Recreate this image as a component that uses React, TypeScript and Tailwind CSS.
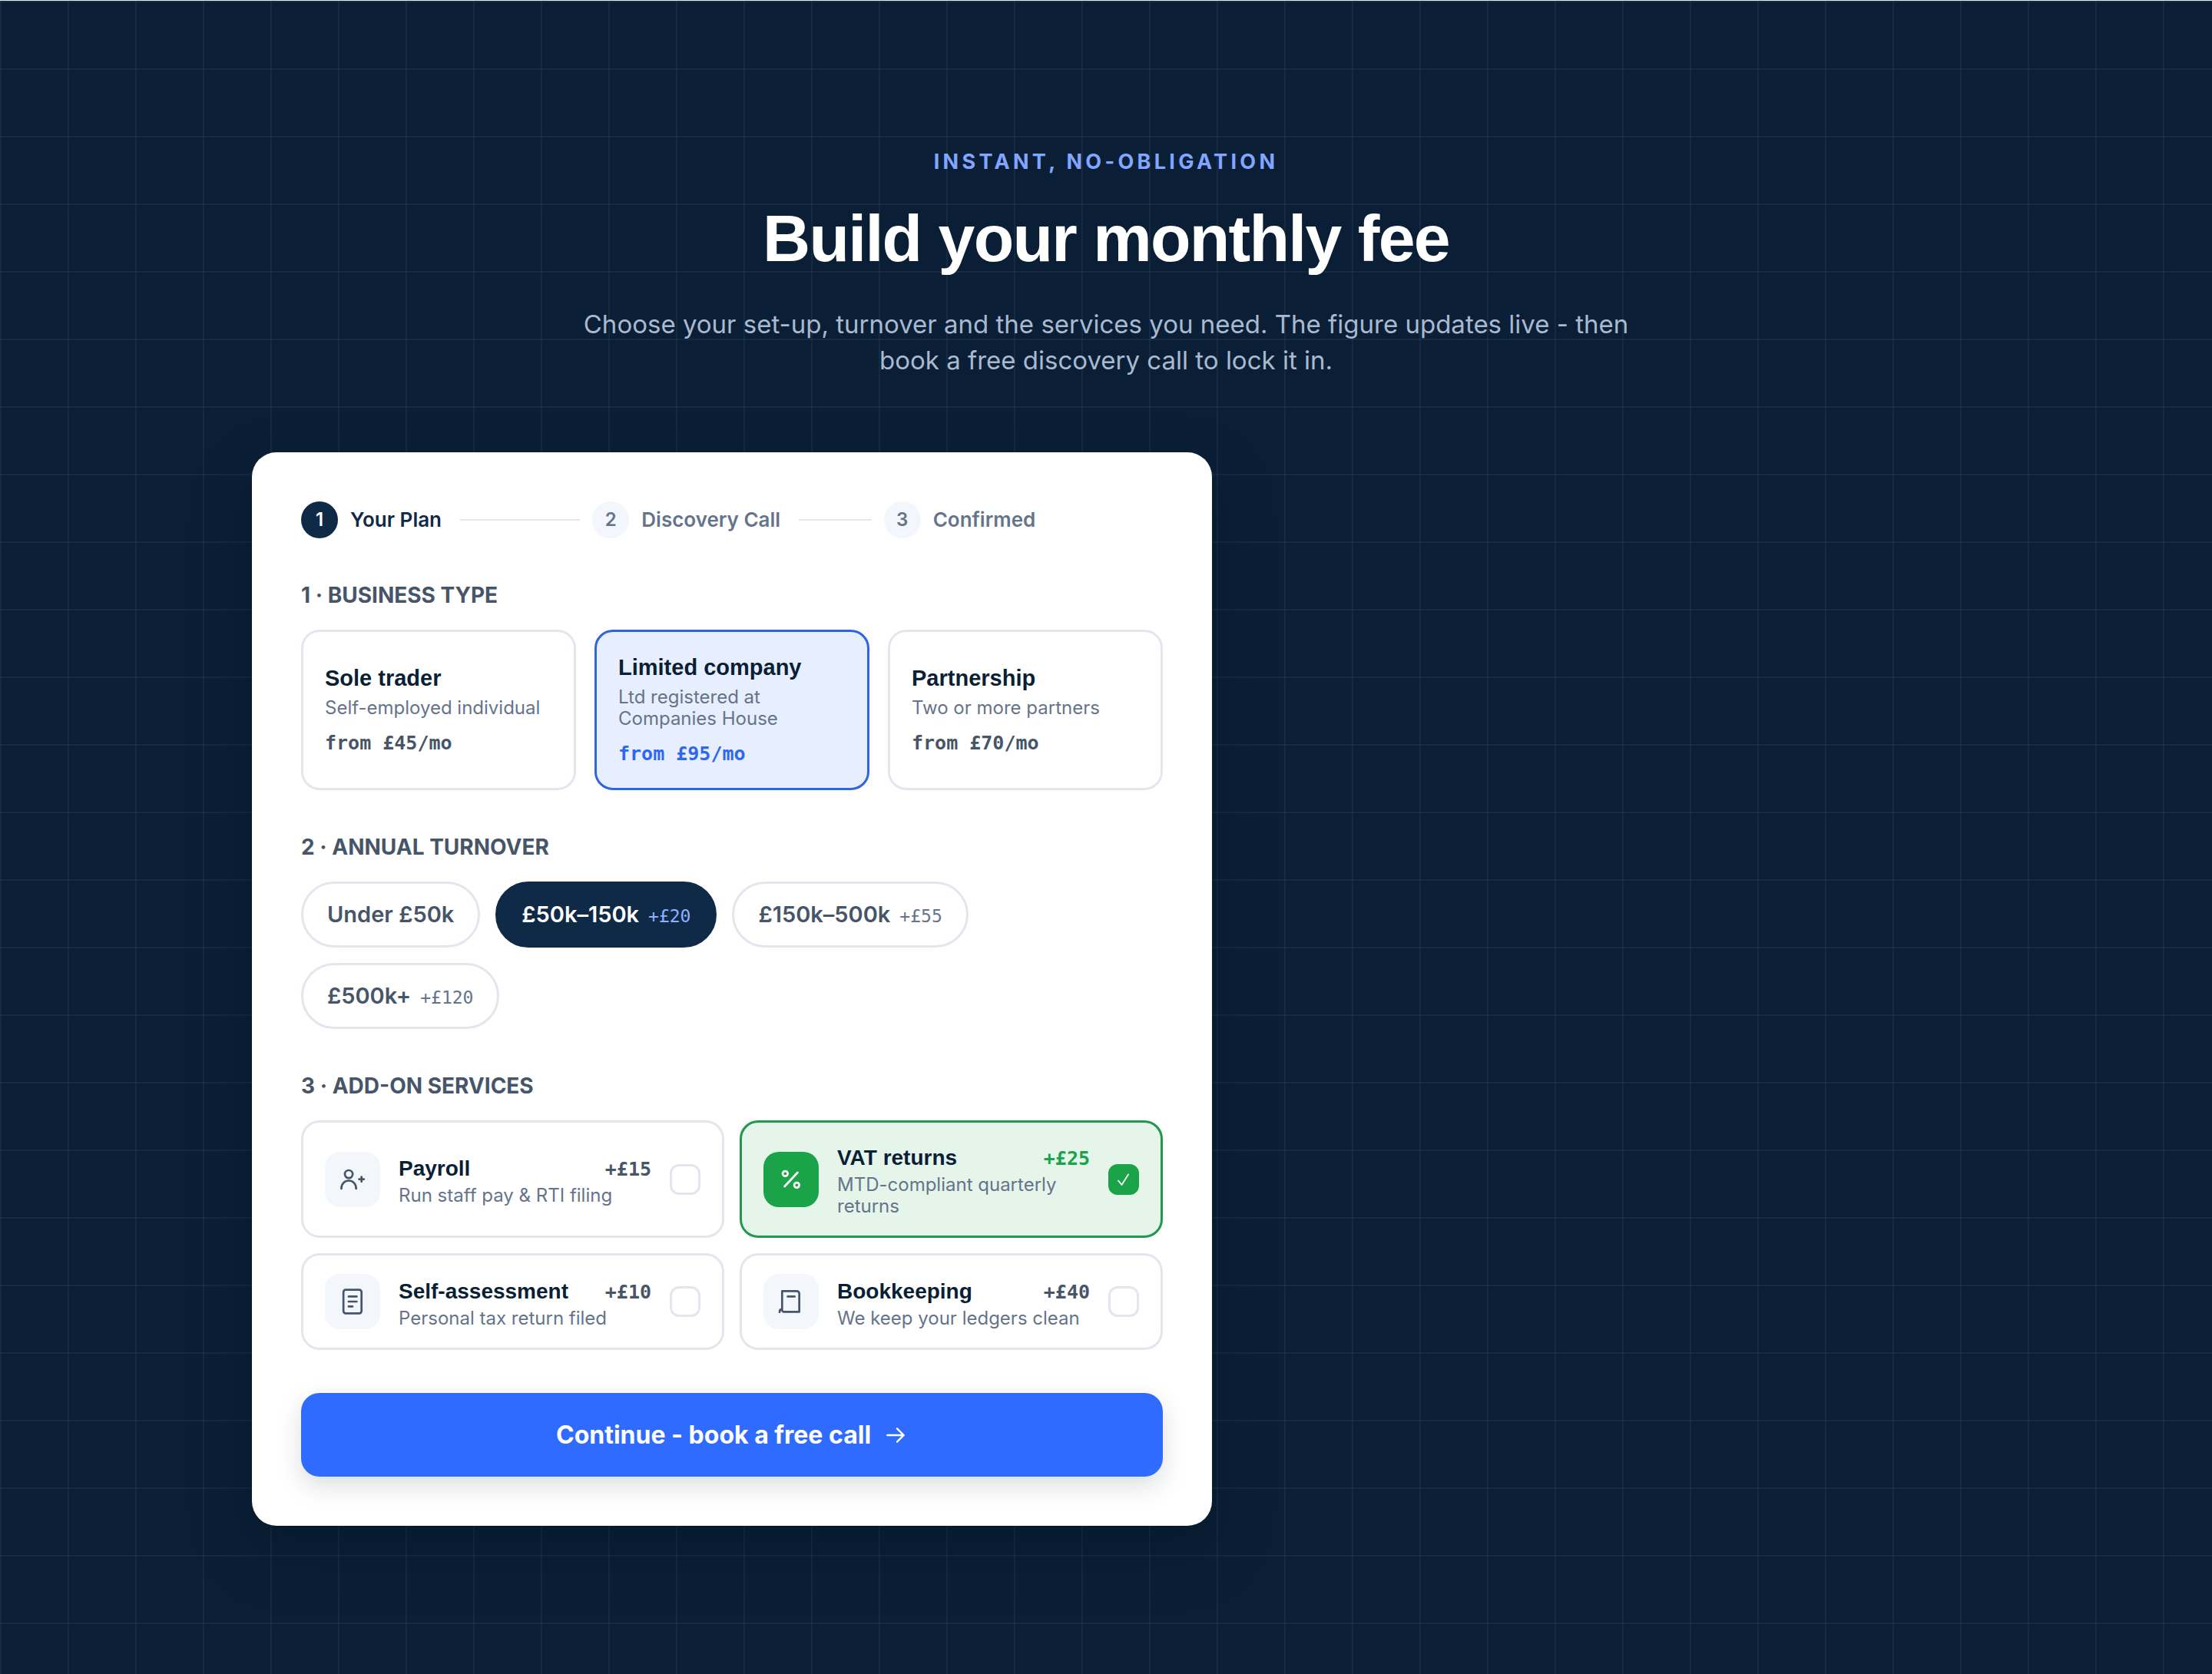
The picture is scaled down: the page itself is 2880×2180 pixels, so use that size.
import { useState, type ReactNode } from "react";

const mono = "font-['DejaVu_Sans_Mono',monospace]";
const display = "font-['Liberation_Sans',Arial,sans-serif]";

const steps = ["Your Plan", "Discovery Call", "Confirmed"];

const plans = [
  { name: "Sole trader", note: "Self-employed individual", price: "from £45/mo" },
  { name: "Limited company", note: "Ltd registered at Companies House", price: "from £95/mo" },
  { name: "Partnership", note: "Two or more partners", price: "from £70/mo" },
];

const bands = [
  { label: "Under £50k", extra: "" },
  { label: "£50k–150k", extra: "+£20" },
  { label: "£150k–500k", extra: "+£55" },
  { label: "£500k+", extra: "+£120" },
];

function Glyph({ children }: { children: ReactNode }) {
  return (
    <svg
      viewBox="0 0 24 24"
      className="size-9"
      fill="none"
      stroke="currentColor"
      strokeWidth="1.8"
      strokeLinecap="round"
      strokeLinejoin="round"
      aria-hidden="true"
    >
      {children}
    </svg>
  );
}

const addons = [
  {
    name: "Payroll",
    note: "Run staff pay & RTI filing",
    price: "+£15",
    icon: (
      <Glyph>
        <circle cx="8.7" cy="7.4" r="3.4" />
        <path d="M2.3 20v-.4a6.4 6.6 0 0 1 12.8 0v.4" />
        <path d="M19.8 9.7v4.2M17.7 11.8h4.2" />
      </Glyph>
    ),
  },
  {
    name: "VAT returns",
    note: "MTD-compliant quarterly returns",
    price: "+£25",
    icon: (
      <Glyph>
        <path d="M17.6 6 6.4 18" />
        <circle cx="6.9" cy="6.9" r="2.2" />
        <circle cx="16.9" cy="16.9" r="2.2" />
      </Glyph>
    ),
  },
  {
    name: "Self-assessment",
    note: "Personal tax return filed",
    price: "+£10",
    icon: (
      <Glyph>
        <rect x="4.1" y="1.8" width="15.7" height="20.4" rx="2" />
        <path d="M8.6 7.6h7M8.6 12h7M8.6 16.3h3.4" />
      </Glyph>
    ),
  },
  {
    name: "Bookkeeping",
    note: "We keep your ledgers clean",
    price: "+£40",
    icon: (
      <Glyph>
        <path d="M4.2 18.6V2.9h12.7a2.2 2.2 0 0 1 2.2 2.2v15.8H6a1.8 1.8 0 0 1-1.8-2.3c-1.6 0-2.2 1-2.2 2.5" />
        <path d="M9.1 7.6h6" />
      </Glyph>
    ),
  },
];

function SectionTitle({ children }: { children: ReactNode }) {
  return (
    <h2 className="mt-14 mb-[26px] text-[28px] leading-[37px] font-bold text-[#475569] uppercase">
      {children}
    </h2>
  );
}

function StepList() {
  return (
    <ol className="grid grid-cols-3 gap-4">
      {steps.map((step, i) => (
        <li key={step} className="flex items-center gap-4">
          <span
            className={`grid size-12 shrink-0 place-items-center rounded-full text-[24px] font-semibold ${
              i === 0 ? "bg-[#0f2a47] text-white" : "bg-[#f3f6fc] text-[#64748b]"
            }`}
          >
            {i + 1}
          </span>
          <span
            className={`text-[26px] leading-9 font-semibold whitespace-nowrap ${
              i === 0 ? "text-[#0f2a47]" : "text-[#64748b]"
            }`}
          >
            {step}
          </span>
          {i < steps.length - 1 && <span className="ml-2 h-0.5 flex-1 bg-[#e2e7f0]" />}
        </li>
      ))}
    </ol>
  );
}

function Calculator() {
  const [plan, setPlan] = useState(1);
  const [band, setBand] = useState(1);
  const [picked, setPicked] = useState([false, true, false, false]);

  return (
    <form
      className="rounded-[32px] bg-white p-16 shadow-[0_32px_80px_rgba(2,10,22,0.28)]"
      onSubmit={(e) => e.preventDefault()}
    >
      <StepList />

      <SectionTitle>1 · Business type</SectionTitle>
      <div className="grid grid-cols-3 gap-6">
        {plans.map((p, i) => (
          <button
            key={p.name}
            type="button"
            aria-pressed={plan === i}
            onClick={() => setPlan(i)}
            className={`flex flex-col justify-center rounded-3xl border-3 p-7 text-left ${
              plan === i ? "border-[#2f65de] bg-[#e7eefe]" : "border-[#e2e7ee] bg-white"
            }`}
          >
            <span className={`${display} text-[29px] leading-9 font-bold text-[#0a1f36]`}>{p.name}</span>
            <span className="mt-[7px] text-[24px] leading-7 text-[#64748b]">{p.note}</span>
            <span
              className={`${mono} mt-4 text-[25px] leading-8 font-bold ${
                plan === i ? "text-[#2f68f0]" : "text-[#475569]"
              }`}
            >
              {p.price}
            </span>
          </button>
        ))}
      </div>

      <SectionTitle>2 · Annual turnover</SectionTitle>
      <div className="flex flex-wrap gap-5">
        {bands.map((b, i) => (
          <button
            key={b.label}
            type="button"
            aria-pressed={band === i}
            onClick={() => setBand(i)}
            className={`flex items-baseline gap-3 rounded-full border-3 px-[31px] py-5 text-[29px] leading-10 font-semibold ${
              band === i ? "border-[#0f2a47] bg-[#0f2a47] text-white" : "border-[#e2e7ee] bg-white text-[#475569]"
            }`}
          >
            {b.label}
            {b.extra && (
              <span
                className={`${mono} text-[23px] leading-7 font-normal ${
                  band === i ? "text-[#8fb0ff]" : "text-[#64748b]"
                }`}
              >
                {b.extra}
              </span>
            )}
          </button>
        ))}
      </div>

      <SectionTitle>3 · Add-on services</SectionTitle>
      <div className="grid grid-cols-2 gap-5">
        {addons.map((a, i) => {
          const on = picked[i];
          return (
            <label
              key={a.name}
              className={`flex items-center gap-6 rounded-3xl border-3 px-7 py-6 ${
                on ? "border-[#22984f] bg-[#e5f5ea]" : "border-[#e2e7ee] bg-white"
              }`}
            >
              <span
                className={`grid size-[72px] shrink-0 place-items-center rounded-[20px] ${
                  on ? "bg-[#1ba34a] text-white" : "bg-[#f3f7fc] text-[#475569]"
                }`}
              >
                {a.icon}
              </span>
              <span className="min-w-0 flex-1">
                <span className="flex items-baseline justify-between">
                  <span className={`${display} text-[28px] leading-[43px] font-bold text-[#0a1f36]`}>{a.name}</span>
                  <span
                    className={`${mono} text-[25px] leading-7 font-bold ${on ? "text-[#1ba34a]" : "text-[#475569]"}`}
                  >
                    {a.price}
                  </span>
                </span>
                <span className="block text-[24px] leading-7 text-[#64748b]">{a.note}</span>
              </span>
              <span className="grid size-10 shrink-0 place-items-center">
                <input
                  type="checkbox"
                  checked={on}
                  onChange={() => setPicked(picked.map((v, k) => (k === i ? !v : v)))}
                  className="col-start-1 row-start-1 size-10 appearance-none rounded-xl border-3 border-[#e2e7ee] bg-white checked:border-[#1ba34a] checked:bg-[#1ba34a]"
                />
                {on && (
                  <svg
                    viewBox="0 0 24 24"
                    className="pointer-events-none col-start-1 row-start-1 size-6 text-white"
                    fill="none"
                    stroke="currentColor"
                    strokeWidth="1.8"
                    strokeLinecap="round"
                    strokeLinejoin="round"
                    aria-hidden="true"
                  >
                    <path d="m5 13.5 4.5 5.5L18 5.5" />
                  </svg>
                )}
              </span>
            </label>
          );
        })}
      </div>

      <button
        type="submit"
        className="mt-14 flex w-full items-center justify-center gap-4 rounded-3xl bg-[#2f6bff] py-8 text-[32px] leading-[45px] font-bold text-white shadow-[0_12px_32px_rgba(10,31,54,0.15)]"
      >
        Continue - book a free call
        <svg
          viewBox="0 0 24 24"
          className="size-8"
          fill="none"
          stroke="currentColor"
          strokeWidth="1.8"
          strokeLinecap="round"
          strokeLinejoin="round"
          aria-hidden="true"
        >
          <path d="M4 12h16M13.5 5.5 20 12l-6.5 6.5" />
        </svg>
      </button>
    </form>
  );
}

export default function App() {
  return (
    <main className="min-h-screen border-t border-[#e6eef0] bg-[#0a1f36] bg-[linear-gradient(to_right,rgba(255,255,255,0.045)_2px,transparent_2px),linear-gradient(to_bottom,rgba(255,255,255,0.045)_2px,transparent_2px)] bg-size-[88px_88px] px-12 py-48 font-['Inter',sans-serif]">
      <div className="mx-auto max-w-[2224px]">
        <header className="mx-auto mb-24 max-w-[1400px] text-center">
          <p className="text-[27px] leading-9 font-bold tracking-[0.16em] text-[#82a6ff] uppercase">
            Instant, no-obligation
          </p>
          <h1 className={`${display} mt-[35px] text-[86px] leading-[93px] font-bold tracking-[-0.02em] text-white`}>
            Build your monthly fee
          </h1>
          <p className="mt-[42px] text-[33px] leading-[47px] text-[#a9b9d0]">
            Choose your set-up, turnover and the services you need. The figure updates live - then book a free
            discovery call to lock it in.
          </p>
        </header>
        <div className="grid grid-cols-[1.35fr_1fr] items-start gap-12">
          <Calculator />
        </div>
      </div>
    </main>
  );
}
